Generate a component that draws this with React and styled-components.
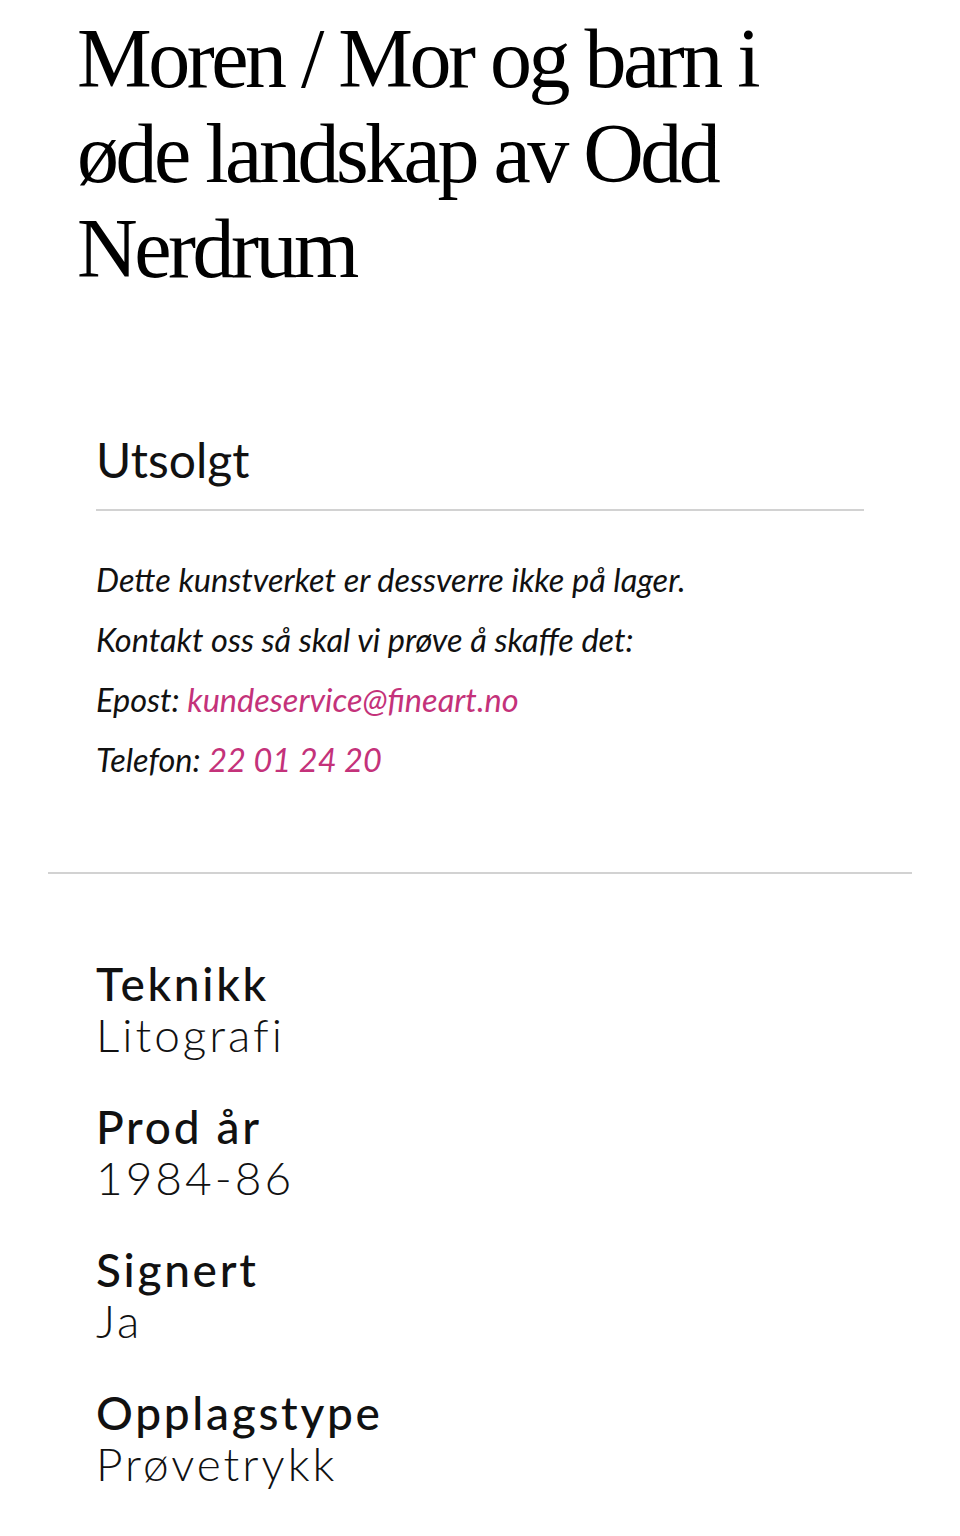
import React from 'react'
import styled, { createGlobalStyle } from 'styled-components';

const details = [
    { label: 'Teknikk', value: 'Litografi' },
    { label: 'Prod år', value: '1984-86' },
    { label: 'Signert', value: 'Ja' },
    { label: 'Opplagstype', value: 'Prøvetrykk' },
];

const GlobalStyle = createGlobalStyle`
    html, body{
        margin: 0;
        padding: 0;
        background: #fff;
        color: #111;
        font-family: Lato, 'Open Sans', sans-serif;
    }
`;

function App() {
    return (
        <Page>
            <GlobalStyle />
            <Title>Moren / Mor og barn i øde landskap av Odd Nerdrum</Title>

            <StockBox>
                <StockHeading>Utsolgt</StockHeading>
                <StockText>
                    <p>Dette kunstverket er dessverre ikke på lager.</p>
                    <p>Kontakt oss så skal vi prøve å skaffe det:</p>
                    <p>Epost: <a href="mailto:kundeservice@fineart.no">kundeservice@fineart.no</a></p>
                    <p>Telefon: <a href="tel:22012420">22 01 24 20</a></p>
                </StockText>
            </StockBox>

            <Divider />

            <DetailList>
                {details.map((item) => (
                    <DetailItem key={item.label}>
                        <dt>{item.label}</dt>
                        <dd>{item.value}</dd>
                    </DetailItem>
                ))}
            </DetailList>
        </Page>
    )
}

const Page = styled.main`
    padding: 11px 48px 40px;
`;

const Title = styled.h1`
    margin: 0 0 0 29px;
    max-width: 740px;
    font-family: 'Liberation Serif', 'Times New Roman', serif;
    font-weight: 400;
    font-size: 84px;
    line-height: 95px;
    letter-spacing: -3.5px;
    color: #000;
`;

const StockBox = styled.section`
    margin-top: 136px;
    padding: 0 48px;
`;

const StockHeading = styled.h2`
    margin: 0;
    padding-bottom: 22px;
    border-bottom: 2px solid #d2d2d2;
    font-family: Lato, sans-serif;
    font-weight: 400;
    font-size: 48px;
    line-height: 55px;
    color: #111;
`;

const StockText = styled.div`
    margin-top: 39px;
    font-style: italic;
    font-size: 32.5px;
    line-height: 60px;
    color: #111;

    p{
        margin: 0;
    }

    a{
        color: #c4327a;
        text-decoration: none;
    }
`;

const Divider = styled.hr`
    margin: 82px 0 0;
    border: 0;
    border-top: 2px solid #d2d2d2;
`;

const DetailList = styled.dl`
    margin: 84px 0 0;
    padding: 0 48px;
    display: flex;
    flex-direction: column;
    gap: 41px;
`;

const DetailItem = styled.div`
    dt, dd{
        margin: 0;
        font-size: 46px;
        line-height: 51px;
        color: #111;
    }
    dt{
        font-weight: 500;
        letter-spacing: 2.7px;
    }
    dd{
        font-weight: 300;
        letter-spacing: 3px;
    }
`;

export default App;
